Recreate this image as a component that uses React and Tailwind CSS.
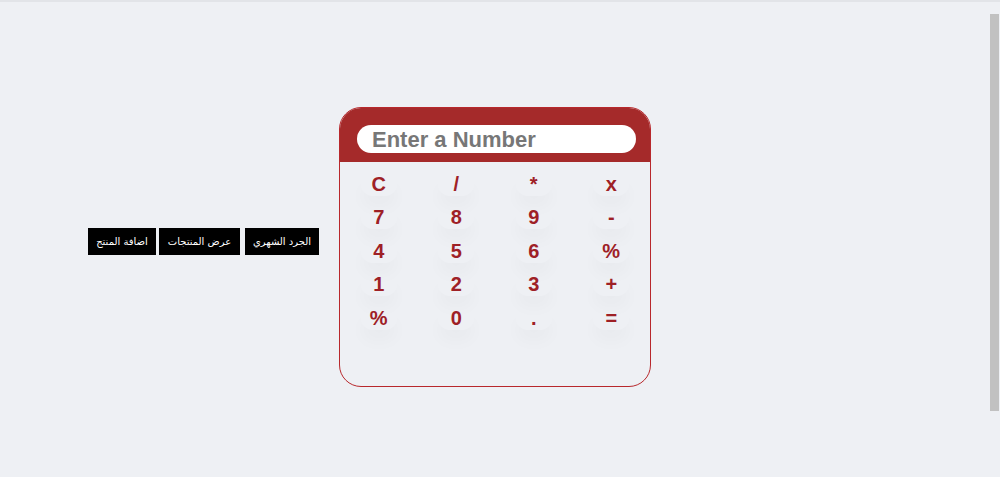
export default function App() {
  const keys = ["C", "/", "*", "x", "7", "8", "9", "-", "4", "5", "6", "%", "1", "2", "3", "+", "%", "0", ".", "="];
  const navs = [
    { t: "اضافة المنتج", w: "w-[68px]", m: "" },
    { t: "عرض المنتجات", w: "w-[81px]", m: "ml-[3px]" },
    { t: "الجرد الشهري", w: "w-[74px]", m: "ml-[5px]" },
  ];
  return (
    <div className="h-[477px] w-[1000px] overflow-hidden bg-[#eef0f4] border-t-2 border-[#e2e4e8] flex">
      <div className="flex-1 h-[540px] flex items-start pl-[88px] pt-[105px]">
        <div className="flex mt-[121px] mr-[20px]">
          {navs.map((n, i) => (
            <button
              key={i}
              dir="rtl"
              className={`h-[27px] bg-black text-white text-[10px] whitespace-nowrap flex items-center justify-center ${n.w} ${n.m}`}
              style={{ fontFamily: '"DejaVu Sans", "Noto Sans", sans-serif' }}
            >
              {n.t}
            </button>
          ))}
        </div>
        <div className="w-[312px] h-[280px] rounded-[22px] border border-[#b8282c] overflow-hidden bg-[#eef0f4]">
          <div className="bg-[#a52a2a] pt-[17px] pb-[9px] pl-[17px] pr-[14px]">
            <input
              placeholder="Enter a Number"
              className="w-full h-[28px] rounded-full bg-white px-[15px] text-[22px] font-bold text-[#777] placeholder:text-[#777] outline-none"
              style={{ fontFamily: '"Liberation Sans", Arial, sans-serif' }}
            />
          </div>
          <div className="grid grid-cols-4 pt-[5px]">
            {keys.map((k, i) => (
              <div key={i} className="h-[33.5px] flex items-center justify-center">
                <div
                  className="w-[36px] h-[24px] flex items-center justify-center text-[20px] font-bold text-[#9e2026] shadow-[0_12px_16px_rgba(0,0,0,0.025)] rounded-full"
                  style={{ fontFamily: '"Liberation Sans", Arial, sans-serif' }}
                >
                  {k}
                </div>
              </div>
            ))}
          </div>
        </div>
      </div>
      <div className="w-[12px] h-full flex flex-col items-center pt-[12px]">
        <div className="w-[9px] h-[397px] bg-[#c1c1c1]"></div>
      </div>
    </div>
  );
}
